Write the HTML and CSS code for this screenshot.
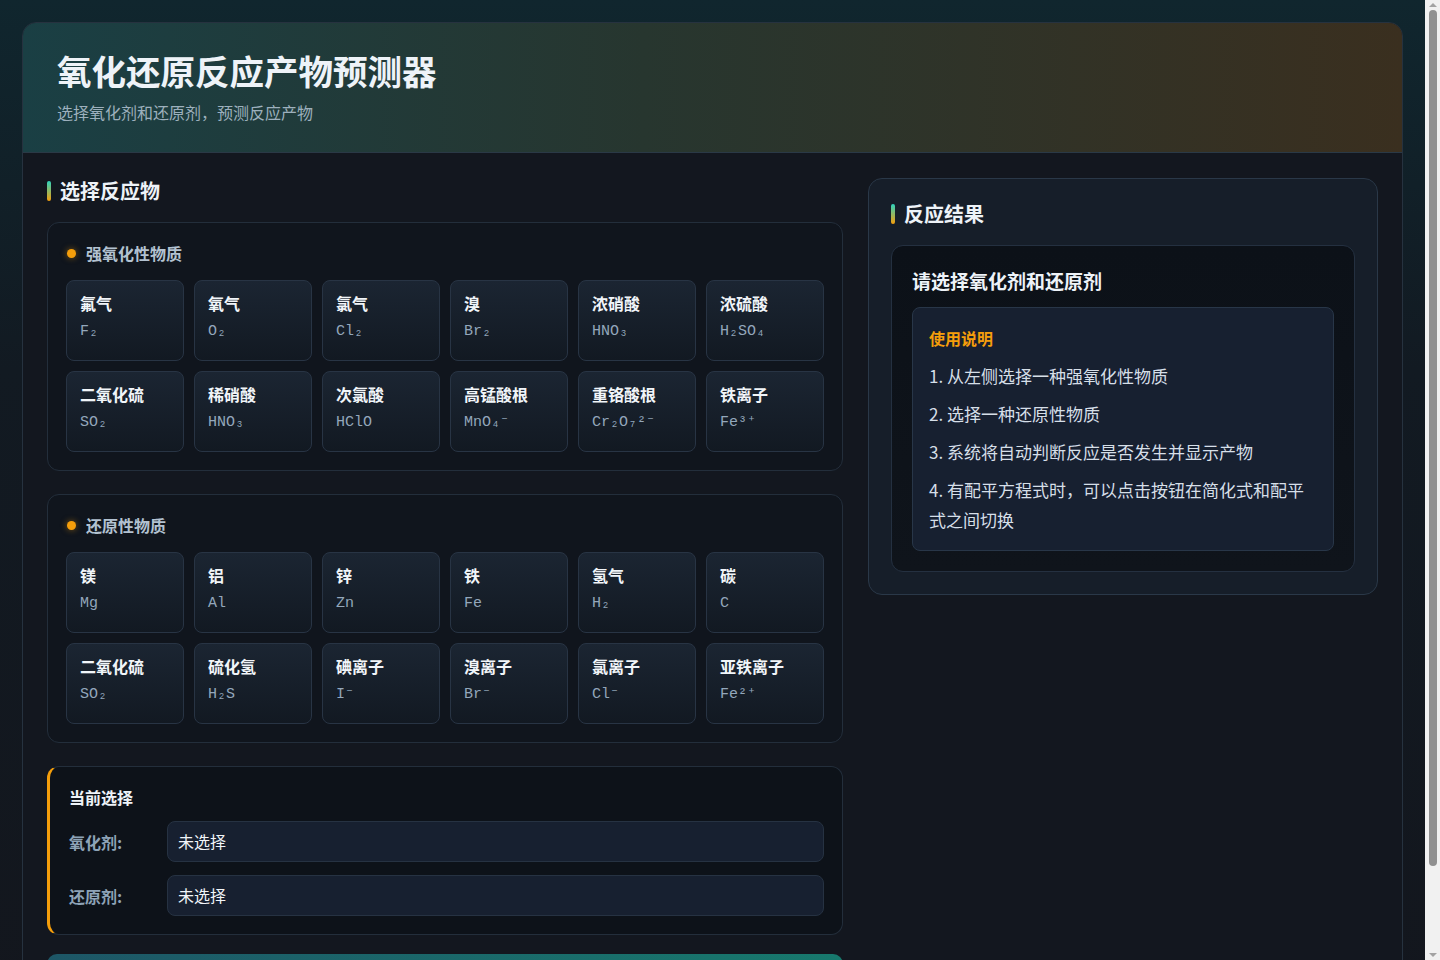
FILE: index.html
```html
<!DOCTYPE html>
<html lang="zh-CN">
<head>
<meta charset="UTF-8">
<meta name="viewport" content="width=device-width, initial-scale=1.0">
<title>氧化还原反应产物预测器</title>
<link rel="stylesheet" href="styles.css">
</head>
<body>
<div class="app">
    <header class="app-header">
        <h1>氧化还原反应产物预测器</h1>
        <p>选择氧化剂和还原剂，预测反应产物</p>
    </header>

    <main class="app-main">
        <section class="panel-left">
            <h2 class="section-title">选择反应物</h2>

            <div class="group">
                <div class="group-title">强氧化性物质</div>
                <div class="card-grid">
                    <div class="card"><div class="name">氟气</div><div class="formula">F₂</div></div>
                    <div class="card"><div class="name">氧气</div><div class="formula">O₂</div></div>
                    <div class="card"><div class="name">氯气</div><div class="formula">Cl₂</div></div>
                    <div class="card"><div class="name">溴</div><div class="formula">Br₂</div></div>
                    <div class="card"><div class="name">浓硝酸</div><div class="formula">HNO₃</div></div>
                    <div class="card"><div class="name">浓硫酸</div><div class="formula">H₂SO₄</div></div>
                    <div class="card"><div class="name">二氧化硫</div><div class="formula">SO₂</div></div>
                    <div class="card"><div class="name">稀硝酸</div><div class="formula">HNO₃</div></div>
                    <div class="card"><div class="name">次氯酸</div><div class="formula">HClO</div></div>
                    <div class="card"><div class="name">高锰酸根</div><div class="formula">MnO₄⁻</div></div>
                    <div class="card"><div class="name">重铬酸根</div><div class="formula">Cr₂O₇²⁻</div></div>
                    <div class="card"><div class="name">铁离子</div><div class="formula">Fe³⁺</div></div>
                </div>
            </div>

            <div class="group">
                <div class="group-title">还原性物质</div>
                <div class="card-grid">
                    <div class="card"><div class="name">镁</div><div class="formula">Mg</div></div>
                    <div class="card"><div class="name">铝</div><div class="formula">Al</div></div>
                    <div class="card"><div class="name">锌</div><div class="formula">Zn</div></div>
                    <div class="card"><div class="name">铁</div><div class="formula">Fe</div></div>
                    <div class="card"><div class="name">氢气</div><div class="formula">H₂</div></div>
                    <div class="card"><div class="name">碳</div><div class="formula">C</div></div>
                    <div class="card"><div class="name">二氧化硫</div><div class="formula">SO₂</div></div>
                    <div class="card"><div class="name">硫化氢</div><div class="formula">H₂S</div></div>
                    <div class="card"><div class="name">碘离子</div><div class="formula">I⁻</div></div>
                    <div class="card"><div class="name">溴离子</div><div class="formula">Br⁻</div></div>
                    <div class="card"><div class="name">氯离子</div><div class="formula">Cl⁻</div></div>
                    <div class="card"><div class="name">亚铁离子</div><div class="formula">Fe²⁺</div></div>
                </div>
            </div>

            <div class="current">
                <div class="current-title">当前选择</div>
                <div class="current-row">
                    <span class="label">氧化剂:</span>
                    <span class="value">未选择</span>
                </div>
                <div class="current-row">
                    <span class="label">还原剂:</span>
                    <span class="value">未选择</span>
                </div>
            </div>

            <button class="predict">预测反应产物</button>
        </section>

        <section class="panel-right">
            <h2 class="section-title">反应结果</h2>
            <div class="result">
                <h3>请选择氧化剂和还原剂</h3>
                <div class="guide">
                    <div class="guide-title">使用说明</div>
                    <p>1. 从左侧选择一种强氧化性物质</p>
                    <p>2. 选择一种还原性物质</p>
                    <p>3. 系统将自动判断反应是否发生并显示产物</p>
                    <p>4. 有配平方程式时，可以点击按钮在简化式和配平式之间切换</p>
                </div>
            </div>
        </section>
    </main>
</div>

<!-- browser scrollbar look-alike -->
<div class="scrollbar" aria-hidden="true">
    <span class="arrow up"></span>
    <span class="thumb"></span>
    <span class="arrow down"></span>
</div>
</body>
</html>
```

FILE: styles.css
```css
* {
    box-sizing: border-box;
}

body {
    margin: 0;
    padding: 22px 37px 22px 22px;
    font-family: "Noto Sans CJK SC", "Noto Sans", sans-serif;
    color: #e8eef5;
    background: linear-gradient(180deg, #10262e 0%, #121a22 35%, #13161d 100%);
    min-height: 100vh;
}

.app {
    border: 1px solid #26323f;
    border-radius: 14px;
    overflow: hidden;
    background: #13171f;
}

/* header */
.app-header {
    padding: 25px 34px 28px;
    border-bottom: 1px solid #2a3946;
    background: linear-gradient(90deg, #1a3f44 0%, #27362f 45%, #3a2f1f 100%);
}

.app-header h1 {
    margin: 0 0 8px;
    font-size: 34.5px;
    line-height: 44px;
    font-weight: 700;
    color: #eef3f8;
}

.app-header p {
    margin: 0;
    font-size: 16px;
    line-height: 24px;
    color: #9db0bd;
}

/* main layout */
.app-main {
    display: grid;
    grid-template-columns: 1fr 510px;
    gap: 25px;
    align-items: start;
    padding: 25px 24px;
}

.section-title {
    display: flex;
    align-items: center;
    gap: 9px;
    margin: 0 0 18px;
    font-size: 20px;
    line-height: 26px;
    font-weight: 700;
    color: #eef3f8;
}

.section-title::before {
    content: "";
    width: 4px;
    height: 20px;
    border-radius: 2px;
    background: linear-gradient(180deg, #2dd4bf, #f59e0b);
}

/* reactant groups */
.group {
    border: 1px solid #232e3b;
    border-radius: 12px;
    background: #10151d;
    padding: 18px;
    margin-bottom: 23px;
}

.group-title {
    display: flex;
    align-items: center;
    gap: 10px;
    margin-bottom: 15px;
    font-size: 16px;
    line-height: 24px;
    font-weight: 700;
    color: #b3c2d1;
}

.group-title::before {
    content: "";
    width: 9px;
    height: 9px;
    margin-left: 1px;
    border-radius: 50%;
    background: #f59e0b;
    box-shadow: 0 0 6px rgba(245, 158, 11, 0.5);
}

.card-grid {
    display: grid;
    grid-template-columns: repeat(6, 1fr);
    gap: 10px;
}

.card {
    padding: 11px 13px 18px;
    border: 1px solid #283444;
    border-radius: 8px;
    background: linear-gradient(180deg, #1b2532 0%, #121922 100%);
}

.card .name {
    font-size: 16px;
    line-height: 22px;
    font-weight: 700;
    color: #f1f5f9;
}

.card .formula {
    margin-top: 8px;
    font-family: "Liberation Mono", "Courier New", monospace;
    font-size: 15px;
    line-height: 20px;
    color: #93a7bb;
}

/* current selection */
.current {
    border: 1px solid #232e3b;
    border-left: 3px solid #f59e0b;
    border-radius: 12px;
    background: #0d1219;
    padding: 18px 18px 18px 19px;
    margin-bottom: 19px;
}

.current-title {
    margin-bottom: 12px;
    font-size: 16px;
    line-height: 24px;
    font-weight: 700;
    color: #eef3f8;
}

.current-row {
    display: grid;
    grid-template-columns: 98px 1fr;
    align-items: center;
}

.current-row + .current-row {
    margin-top: 13px;
}

.current-row .label {
    font-size: 16px;
    font-weight: 700;
    color: #8ea3b7;
}

.current-row .value {
    padding: 9px 10px;
    border: 1px solid #263242;
    border-radius: 8px;
    background: #172030;
    font-size: 16px;
    line-height: 21px;
    color: #f1f5f9;
}

.predict {
    display: block;
    width: 100%;
    height: 52px;
    border: 0;
    border-radius: 10px;
    background: linear-gradient(90deg, #1d5666 0%, #17796d 100%);
    font-family: inherit;
    font-size: 17px;
    font-weight: 700;
    color: #ffffff;
}

/* result panel */
.panel-right {
    border: 1px solid #2a3848;
    border-radius: 14px;
    background: #161e29;
    padding: 22px;
}

.result {
    border: 1px solid #243040;
    border-radius: 12px;
    background: linear-gradient(180deg, #0c1118 0%, #0f141b 100%);
    padding: 22px 20px 20px;
}

.result h3 {
    margin: 0 0 13px;
    font-size: 19px;
    line-height: 26px;
    font-weight: 700;
    color: #eef3f8;
}

.guide {
    border: 1px solid #283648;
    border-radius: 8px;
    background: #172030;
    padding: 18px 16px 15px 16px;
}

.guide-title {
    margin-bottom: 11px;
    font-size: 16px;
    line-height: 24px;
    font-weight: 700;
    color: #f59e0b;
}

.guide p {
    margin: 0;
    font-size: 17px;
    line-height: 30px;
    color: #d6dfe8;
}

.guide p + p {
    margin-top: 8px;
}

/* fake window scrollbar */
.scrollbar {
    position: fixed;
    top: 0;
    right: 0;
    bottom: 0;
    width: 15px;
    background: #f1f1f1;
}

.scrollbar .thumb {
    position: absolute;
    top: 10px;
    left: 4px;
    width: 8px;
    height: 856px;
    border-radius: 4px;
    background: #909090;
}

.scrollbar .arrow {
    position: absolute;
    left: 4px;
    width: 0;
    height: 0;
    border-left: 4px solid transparent;
    border-right: 4px solid transparent;
}

.scrollbar .up {
    top: 3px;
    border-bottom: 4px solid #a3a3a3;
}

.scrollbar .down {
    bottom: 3px;
    border-top: 4px solid #a3a3a3;
}
```
